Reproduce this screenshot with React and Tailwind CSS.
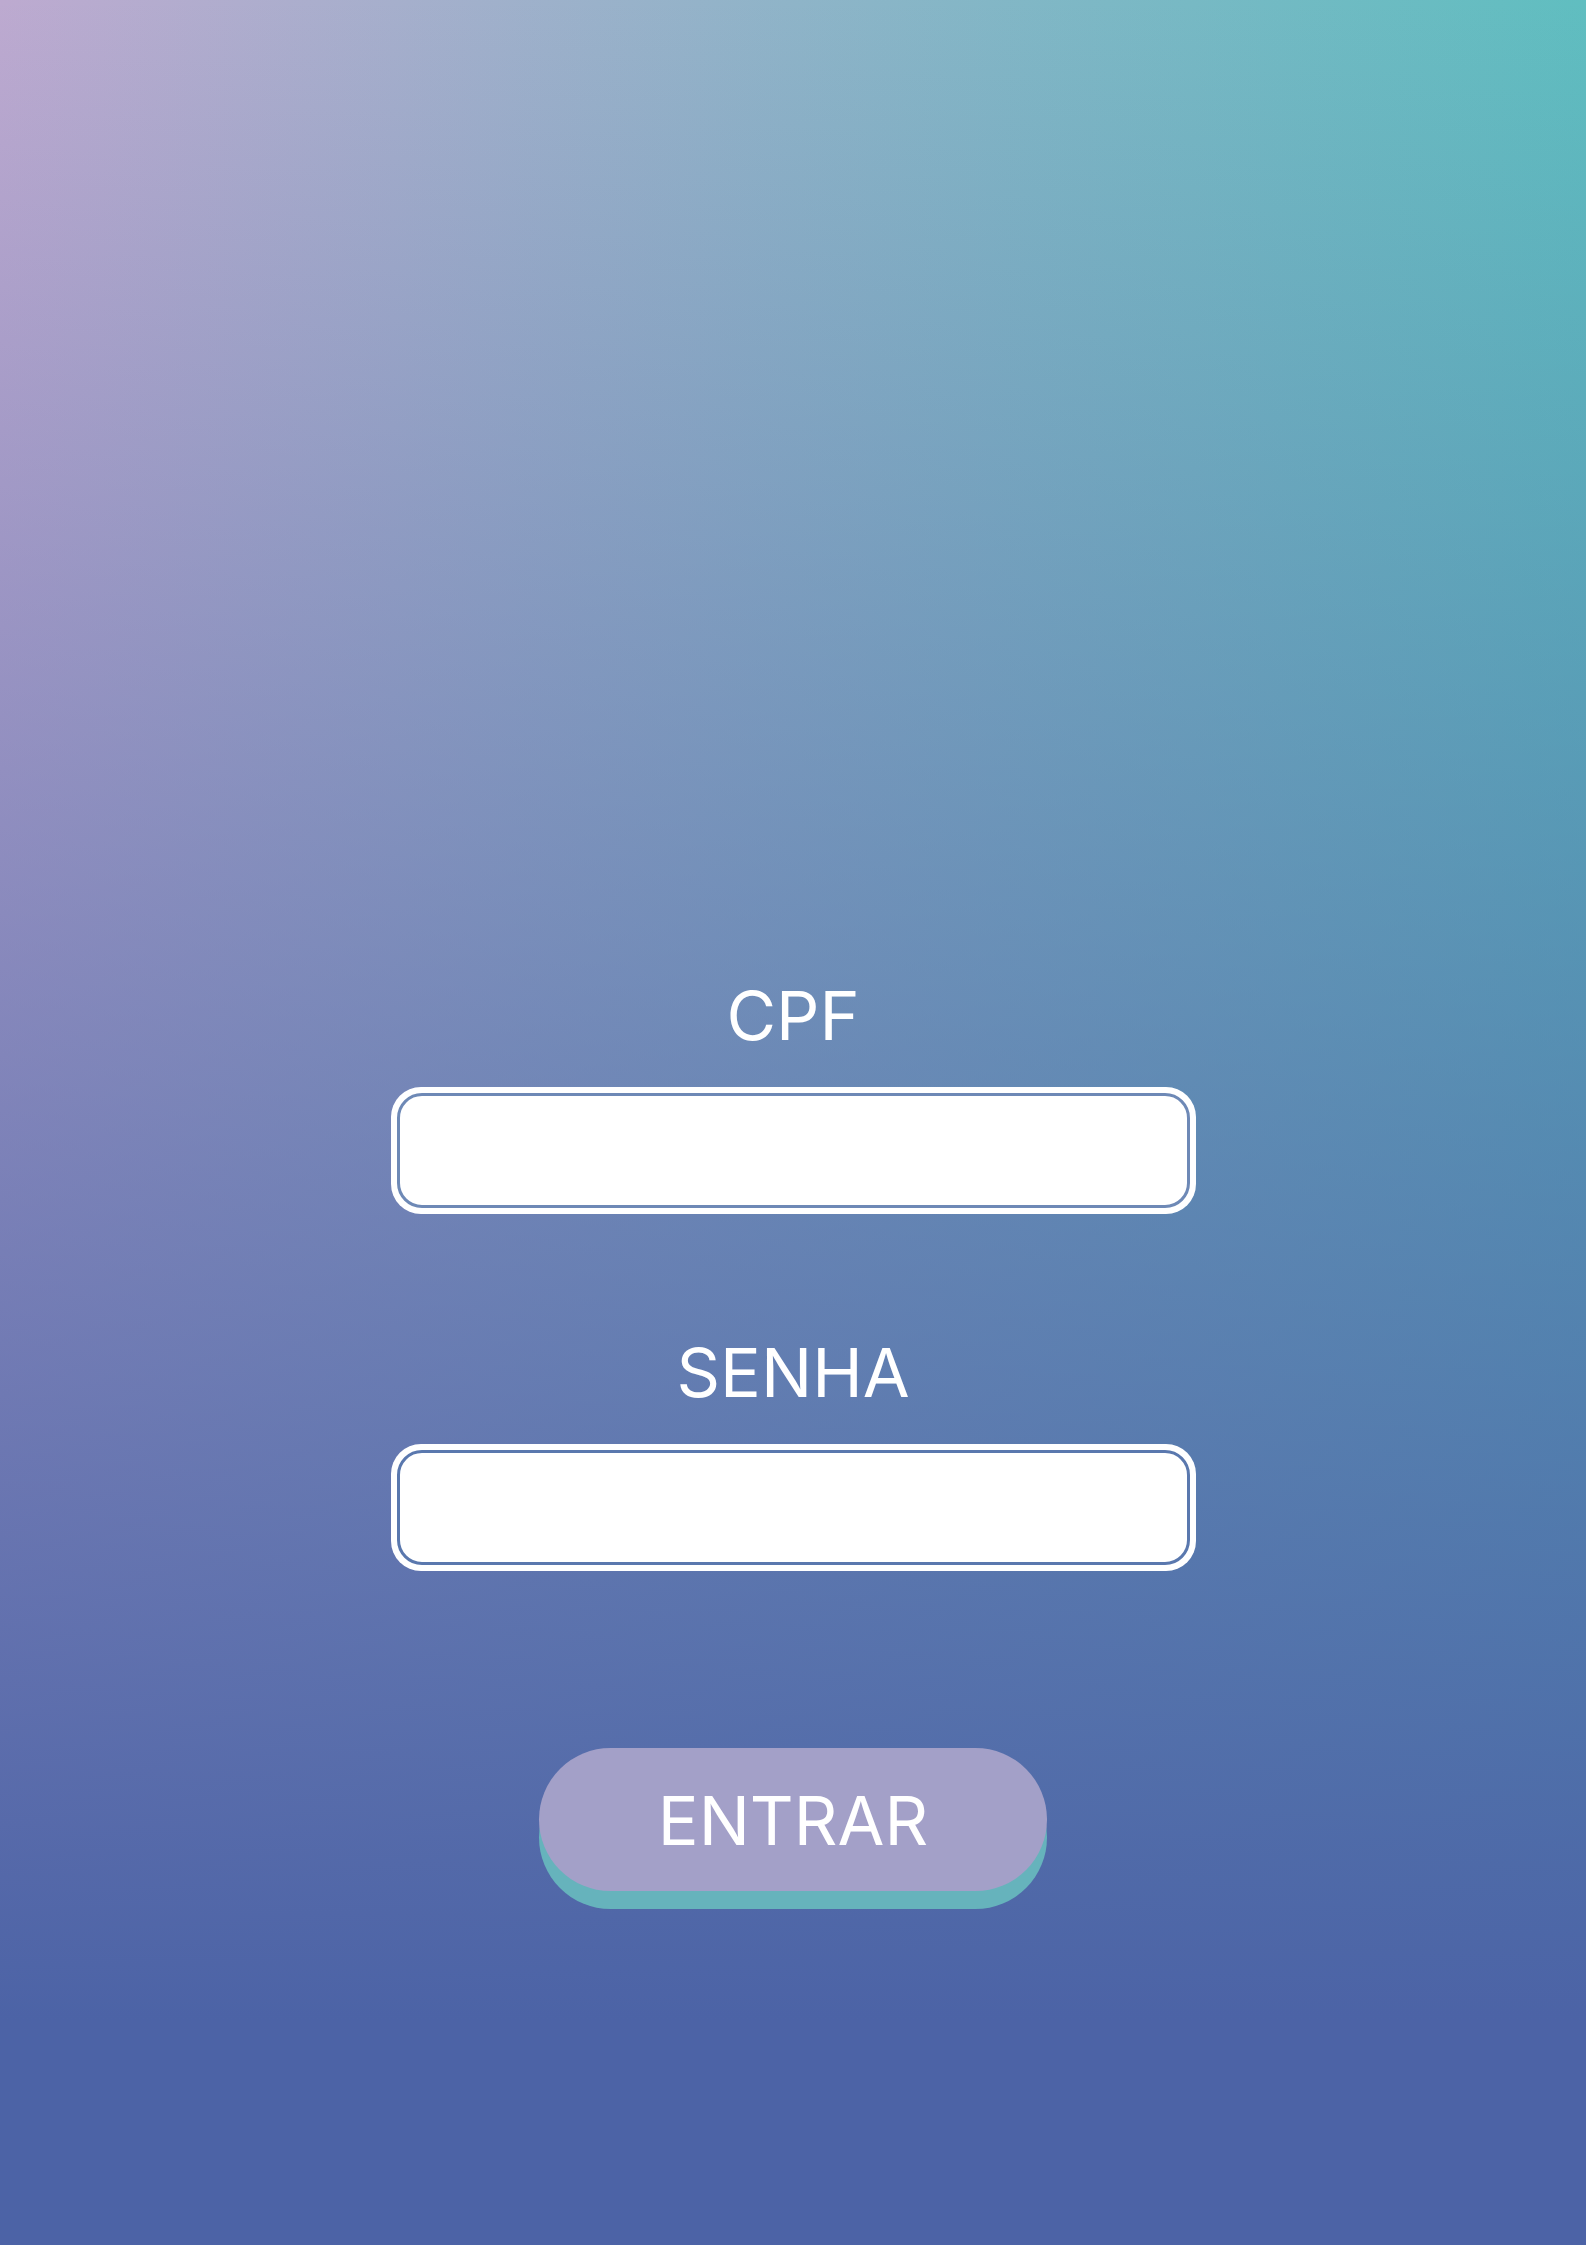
/**
 * Login screen — CPF / SENHA fields and ENTRAR button on a gradient.
 */

function Field({ label, stroke }) {
  return (
    <div className="flex flex-col items-center">
      <label className="h-[68px] text-[68px] leading-none text-white">{label}</label>
      <div className="mt-[38px] h-[127px] w-[805px] rounded-[30px] bg-white p-[6px]">
        <input
          className={`h-full w-full rounded-[25px] border-[3px] bg-white px-6 text-[40px] outline-none ${stroke}`}
        />
      </div>
    </div>
  );
}

export default function App() {
  return (
    <div className="min-h-[2245px] w-full bg-white font-['Inter','Liberation_Sans',sans-serif]">
      <div className="flex min-h-[2245px] w-[1586px] flex-col items-center bg-[linear-gradient(to_bottom,transparent,#4c63a6_90%),linear-gradient(to_right,#bdaad0,#60bec0)] pt-[981px]">
        <Field label="CPF" stroke="border-[#6e89b6]" />
        <div className="mt-[124px]">
          <Field label="SENHA" stroke="border-[#5a78ae]" />
        </div>
        <button className="mt-[177px] h-[143px] w-[508px] rounded-full bg-[#a3a0c8] text-[68px] leading-none text-white shadow-[0_18px_0_#66b3bc]">
          ENTRAR
        </button>
      </div>
    </div>
  );
}
